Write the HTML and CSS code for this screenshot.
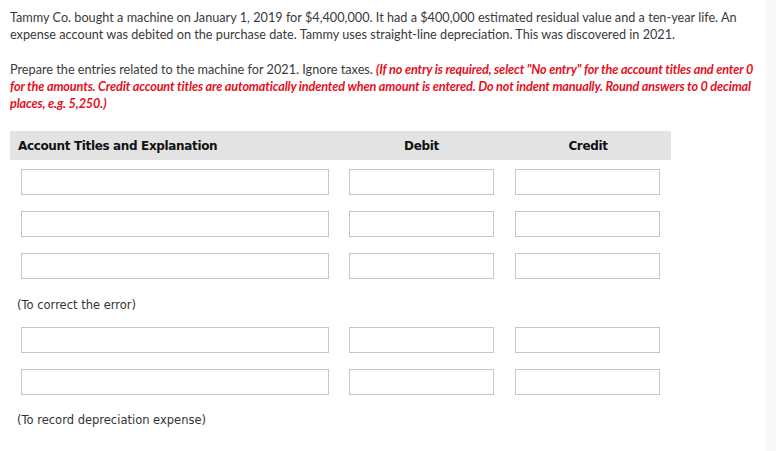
FILE: index.html
```html
<!DOCTYPE html>
<html lang="en">
<head>
<meta charset="utf-8">
<title>Journal entries</title>
<link rel="stylesheet" href="styles.css">
</head>
<body>
<div class="page">
  <main class="content">
    <p class="problem">Tammy Co. bought a machine on January 1, 2019 for $4,400,000. It had a $400,000 estimated residual value and a ten-year life. An expense account was debited on the purchase date. Tammy uses straight-line depreciation. This was discovered in 2021.</p>
    <p class="instructions">Prepare the entries related to the machine for 2021. Ignore taxes. <em class="note">(If no entry is required, select "No entry" for the account titles and enter 0 for the amounts. Credit account titles are automatically indented when amount is entered. Do not indent manually. Round answers to 0 decimal places, e.g. 5,250.)</em></p>

    <div class="journal">
      <div class="head">
        <div class="hcell hleft">Account Titles and Explanation</div>
        <div class="hcell hmid">Debit</div>
        <div class="hcell hmid">Credit</div>
      </div>

      <div class="group first">
        <div class="row"><span class="box acct"></span><span class="box dr"></span><span class="box cr"></span></div>
        <div class="row"><span class="box acct"></span><span class="box dr"></span><span class="box cr"></span></div>
        <div class="row"><span class="box acct"></span><span class="box dr"></span><span class="box cr"></span></div>
      </div>
      <div class="expl expl-first">(To correct the error)</div>

      <div class="group second">
        <div class="row"><span class="box acct"></span><span class="box dr"></span><span class="box cr"></span></div>
        <div class="row"><span class="box acct"></span><span class="box dr"></span><span class="box cr"></span></div>
      </div>
      <div class="expl expl-second">(To record depreciation expense)</div>
    </div>
  </main>
  <div class="rail"></div>
</div>
</body>
</html>
```

FILE: styles.css
```css
html, body {
  margin: 0;
  padding: 0;
  background: #ffffff;
}

.page {
  display: flex;
  min-height: 451px;
}

.content {
  flex: 1;
  padding: 9px 0 0 10px;
  font-family: Lato, "Liberation Sans", sans-serif;
  font-size: 12.7px;
  color: #3a3a3a;
}

.rail {
  width: 10px;
  background: #f8f8f8;
}

.problem,
.instructions {
  margin: 0;
  line-height: 16.7px;
}

.instructions {
  margin-top: 19px;
}

.note {
  color: #e5101d;
  font-weight: bold;
  font-style: italic;
  letter-spacing: -0.15px;
}

.journal {
  margin-top: 19.5px;
  width: 661px;
}

.head {
  display: grid;
  grid-template-columns: 328px 167px 166px;
  height: 29px;
  align-items: center;
  background: #e3e3e3;
  font-family: "DejaVu Sans", sans-serif;
  font-weight: bold;
  font-size: 12px;
  color: #111;
  letter-spacing: -0.35px;
}

.hleft {
  padding-left: 8px;
}

.hmid {
  text-align: center;
}

.group {
  display: flex;
  flex-direction: column;
  gap: 16px;
}

.group.first {
  margin-top: 9px;
}

.group.second {
  margin-top: 13px;
}

.row {
  display: grid;
  grid-template-columns: 328px 167px 166px;
  height: 26px;
}

.box {
  display: block;
  height: 26px;
  box-sizing: border-box;
  border: 1px solid #c6c6c6;
  background: #fff;
}

.acct { margin-left: 11px; width: 308px; }
.dr   { margin-left: 11px; width: 145px; }
.cr   { margin-left: 10px; width: 145px; }

.expl {
  padding-left: 7px;
  font-family: "DejaVu Sans", sans-serif;
  font-size: 11.5px;
  color: #333;
  line-height: 17px;
}

.expl-first {
  margin-top: 18px;
}

.expl-second {
  margin-top: 17px;
}
```
